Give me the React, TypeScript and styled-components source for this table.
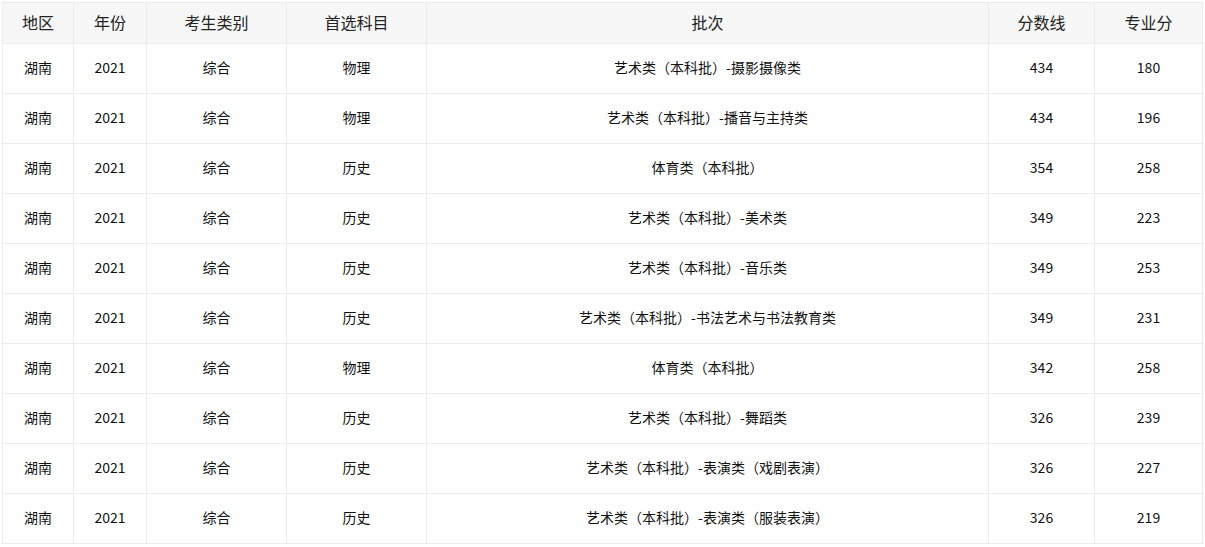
import React from "react";
import styled, { createGlobalStyle } from "styled-components";

const Global = createGlobalStyle`
  html, body { margin: 0; padding: 0; background: #fff; }
  body { font-family: "Noto Sans CJK SC", "Noto Sans", sans-serif; color: #222; }
`;

const Wrap = styled.div`
  padding: 2px;
`;

const Table = styled.table`
  width: 1200px;
  border-collapse: collapse;
  table-layout: fixed;
  border: 1px solid #ececec;
`;

const Th = styled.th`
  height: 38px;
  padding: 0 0 2px;
  background: #f7f7f7;
  border: 1px solid #ececec;
  font-size: 16px;
  font-weight: 400;
  color: #222;
  text-align: center;
  vertical-align: middle;
`;

const Td = styled.td`
  height: 46px;
  padding: 0 0 3px;
  border: 1px solid #ececec;
  font-size: 14px;
  color: #111;
  text-align: center;
  vertical-align: middle;
`;

const widths = [71, 73, 140, 140, 562, 106, 108];
const headers = ["地区", "年份", "考生类别", "首选科目", "批次", "分数线", "专业分"];

const rows: [string, string, string, string][] = [
  ["物理", "艺术类（本科批）-摄影摄像类", "434", "180"],
  ["物理", "艺术类（本科批）-播音与主持类", "434", "196"],
  ["历史", "体育类（本科批）", "354", "258"],
  ["历史", "艺术类（本科批）-美术类", "349", "223"],
  ["历史", "艺术类（本科批）-音乐类", "349", "253"],
  ["历史", "艺术类（本科批）-书法艺术与书法教育类", "349", "231"],
  ["物理", "体育类（本科批）", "342", "258"],
  ["历史", "艺术类（本科批）-舞蹈类", "326", "239"],
  ["历史", "艺术类（本科批）-表演类（戏剧表演）", "326", "227"],
  ["历史", "艺术类（本科批）-表演类（服装表演）", "326", "219"],
];

export default function App() {
  return (
    <>
      <Global />
      <Wrap>
        <Table>
          <colgroup>
            {widths.map((w, i) => (
              <col key={i} style={{ width: w }} />
            ))}
          </colgroup>
          <thead>
            <tr>
              {headers.map((h) => (
                <Th key={h}>{h}</Th>
              ))}
            </tr>
          </thead>
          <tbody>
            {rows.map((r, i) => (
              <tr key={i}>
                <Td>湖南</Td>
                <Td>2021</Td>
                <Td>综合</Td>
                <Td>{r[0]}</Td>
                <Td>{r[1]}</Td>
                <Td>{r[2]}</Td>
                <Td>{r[3]}</Td>
              </tr>
            ))}
          </tbody>
        </Table>
      </Wrap>
    </>
  );
}
